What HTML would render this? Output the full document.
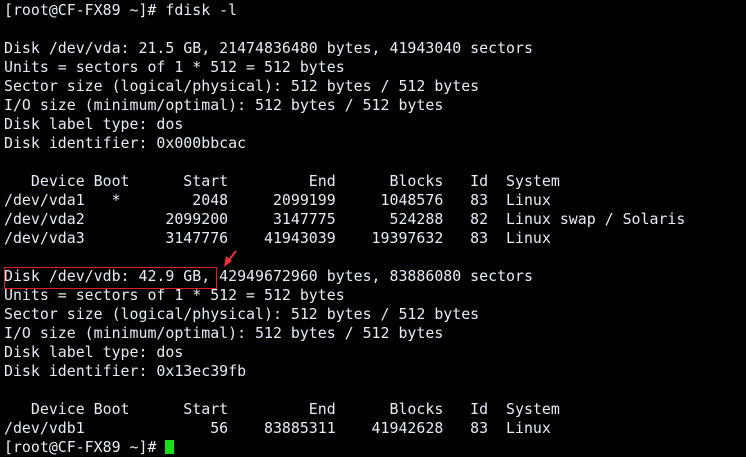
<!DOCTYPE html>
<html><head><meta charset="utf-8"><style>
html,body{margin:0;padding:0;background:#000;width:746px;height:445px;overflow:hidden}
pre{margin:0;position:absolute;left:4px;top:1px;font-family:"DejaVu Sans Mono","Liberation Mono",monospace;font-size:14.9px;line-height:19px;color:#e4ecf6}
.box{position:absolute;left:4px;top:267px;width:213px;height:22px;border:1px solid #e02020;box-sizing:border-box}
.cur{display:inline-block;width:9px;height:14px;background:#18e018;vertical-align:-2px}
</style></head><body>
<pre>[root@CF-FX89 ~]# fdisk -l

Disk /dev/vda: 21.5 GB, 21474836480 bytes, 41943040 sectors
Units = sectors of 1 * 512 = 512 bytes
Sector size (logical/physical): 512 bytes / 512 bytes
I/O size (minimum/optimal): 512 bytes / 512 bytes
Disk label type: dos
Disk identifier: 0x000bbcac

   Device Boot      Start         End      Blocks   Id  System
/dev/vda1   *        2048     2099199     1048576   83  Linux
/dev/vda2         2099200     3147775      524288   82  Linux swap / Solaris
/dev/vda3         3147776    41943039    19397632   83  Linux

Disk /dev/vdb: 42.9 GB, 42949672960 bytes, 83886080 sectors
Units = sectors of 1 * 512 = 512 bytes
Sector size (logical/physical): 512 bytes / 512 bytes
I/O size (minimum/optimal): 512 bytes / 512 bytes
Disk label type: dos
Disk identifier: 0x13ec39fb

   Device Boot      Start         End      Blocks   Id  System
/dev/vdb1              56    83885311    41942628   83  Linux
[root@CF-FX89 ~]# <span class="cur"></span></pre>
<div class="box"></div>
<svg style="position:absolute;left:0;top:0" width="746" height="445"><line x1="236" y1="251" x2="229" y2="260" stroke="#f03030" stroke-width="2"/><polygon points="224,267 226,256 232,261" fill="#f03030"/></svg>
</body></html>
